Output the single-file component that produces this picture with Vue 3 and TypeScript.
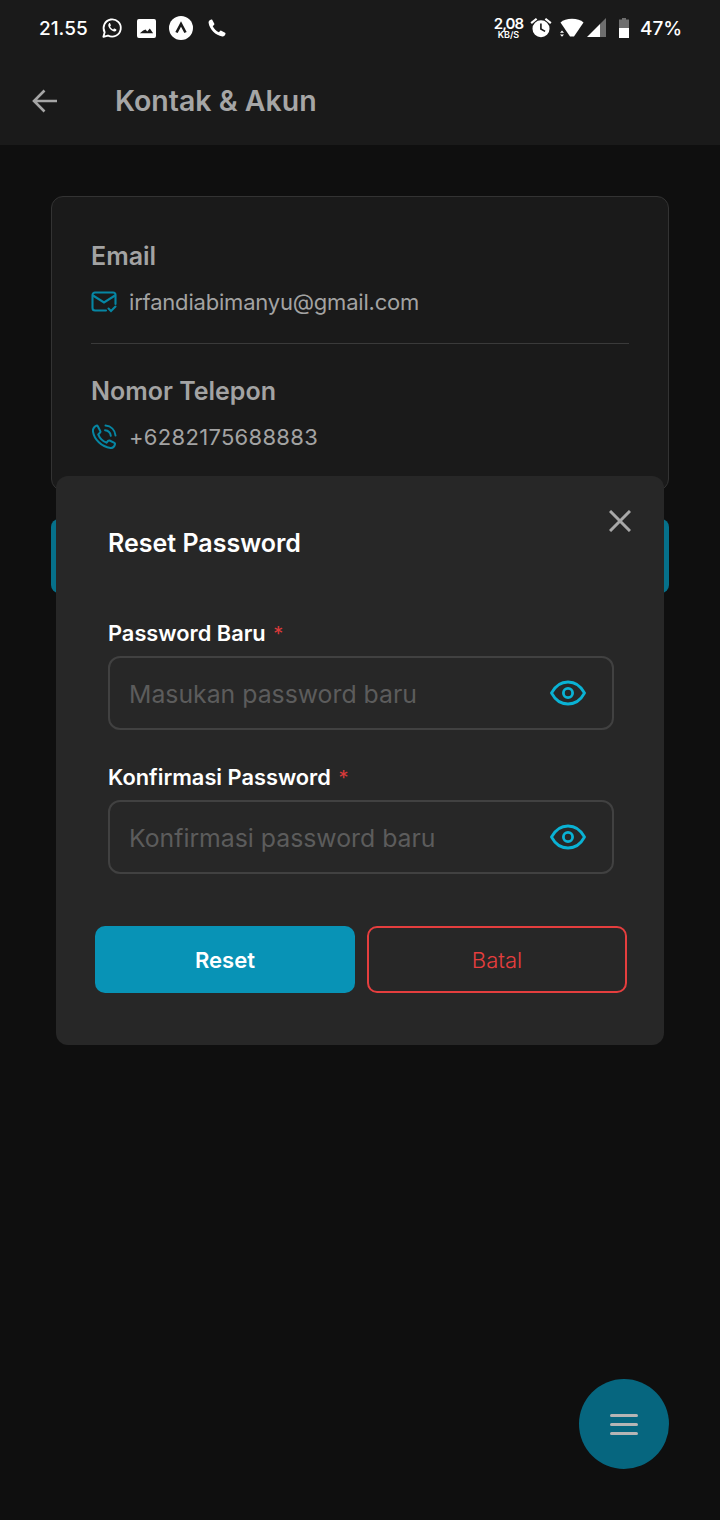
<script setup lang="ts">
import { ref } from 'vue'

const newPassword = ref('')
const confirmPassword = ref('')
</script>

<template>
  <div class="screen">
    <header class="header">
      <div class="status-bar">
        <div class="status-left">
          <span class="clock">21.55</span>
          <svg class="s-wa" viewBox="0 0 24 24" width="22" height="22" fill="none">
            <path d="M2.6 21.6l1.4-5A9.4 9.4 0 1 1 7.6 20.2z" stroke="#fff" stroke-width="2" stroke-linejoin="round" />
            <path d="M8.8 7.2c-.9.8-1.1 2-.5 3.4 1 2.3 2.900 4.100 5.300 5 1.300.5 2.500.1 3.100-.9.300-.5.200-1-.3-1.300l-1.500-.8c-.4-.2-.7-.1-1 .2l-.6.7c-1.500-.6-2.700-1.700-3.400-3.200l.6-.6c.3-.3.300-.6.200-1l-.7-1.500c-.2-.5-.4-.6-.7-.6h-.5z" fill="#fff" />
          </svg>
          <svg class="s-img" viewBox="0 0 20 20" width="19" height="19">
            <path fill="#fff" fill-rule="evenodd" d="M2 0h16a2 2 0 0 1 2 2v16a2 2 0 0 1-2 2H2a2 2 0 0 1-2-2V2a2 2 0 0 1 2-2zm1 15h14l-3.500-5-2.700 3.200L9 11l-2.500 1.200z" />
          </svg>
          <svg class="s-app" viewBox="0 0 24 24" width="24" height="24">
            <circle cx="12" cy="12" r="12" fill="#fff" />
            <path d="M7.500 16.500L12 8l4.500 8.500" fill="none" stroke="#1a1a1a" stroke-width="2.600" />
          </svg>
          <svg class="s-call" viewBox="0 0 24 24" width="20" height="20">
            <path fill="#fff" d="M6.400 2.300l2.400 4.600c.2.400.1.800-.2 1.100L6.900 9.800c1.400 3 4.300 5.900 7.300 7.300l1.800-1.700c.3-.3.700-.4 1.100-.2l4.600 2.400c.5.200.7.700.5 1.200-.6 2.200-2 3.600-3.900 3.300C10.400 21 3 13.600 1.900 5.700 1.600 3.800 3 2.400 5.200 1.800c.5-.2 1 0 1.200.5z" />
          </svg>
        </div>
        <div class="status-right">
          <div class="speed"><span class="speed-num">2,08</span><span class="speed-unit">KB/S</span></div>
          <svg class="s-alarm" viewBox="0 0 24 24" width="22" height="22">
            <path fill="#fff" fill-rule="evenodd" d="M12 3.500a9.300 9.300 0 1 1 0 18.600 9.300 9.300 0 0 1 0-18.600zM11 7v6.500l5 2.900.9-1.400-4.100-2.400V7z" />
            <path fill="#fff" d="M6.500 1L.5 5.800 2 7.600l6-4.800zM17.500 1l6 4.800-1.500 1.800-6-4.800z" />
          </svg>
          <svg class="s-wifi" viewBox="0 0 26 20" width="26" height="20">
            <path fill="#fff" d="M1.500 4.500C4.200 2 8 .8 13 .8s8.800 1.200 11.500 3.700L15 18.500h-4z" />
            <path fill="#fff" d="M3 12.500l2 2.300H1zM1 16.500h4l-2 2.300z" />
          </svg>
          <svg class="s-signal" viewBox="0 0 20 20" width="20" height="20">
            <path fill="#fff" d="M0 19L13 6v13z" />
            <path fill="#6e6e6e" d="M13 6l6-6v19h-6z" />
          </svg>
          <svg class="s-battery" viewBox="0 0 10 20" width="10" height="20">
            <path fill="#6e6e6e" d="M3 0h4v1.500h3V10H0V1.500h3z" />
            <path fill="#fff" d="M0 10h10v10H0z" />
          </svg>
          <span class="pct">47%</span>
        </div>
      </div>
      <div class="toolbar">
        <svg class="back" viewBox="0 0 26 26" width="26" height="26" fill="none">
          <path d="M25 13H2M12.500 2.500L2 13l10.500 10.500" stroke="#a6a6a6" stroke-width="2.600" />
        </svg>
        <h1 class="title">Kontak &amp; Akun</h1>
      </div>
    </header>

    <main class="content">
      <section class="card">
        <div class="info-row with-line">
          <div class="info-label">Email</div>
          <div class="info-value email">
            <svg viewBox="0 0 26 22" width="26" height="22" fill="none">
              <path d="M15 19.500H4a2.500 2.500 0 0 1-2.500-2.500V4A2.500 2.500 0 0 1 4 1.500h18A2.500 2.500 0 0 1 24.500 4v9" stroke="#0686a3" stroke-width="2.100" stroke-linecap="round" />
              <path d="M2 4.500l11 7 11-7" stroke="#0686a3" stroke-width="2.100" />
              <path d="M17.500 17.500l2.500 2.500 4.500-4.500" stroke="#0686a3" stroke-width="2.100" stroke-linecap="round" />
            </svg>
            <span>irfandiabimanyu@gmail.com</span>
          </div>
        </div>
        <div class="info-row phone">
          <div class="info-label">Nomor Telepon</div>
          <div class="info-value">
            <svg viewBox="0 0 26 26" width="26" height="26" fill="none">
              <path d="M6.800 2.200l2.600 5c.3.500.1 1-.3 1.400L7.200 10.400c1.400 3.500 4.600 6.800 8.200 8.300l1.800-1.900c.4-.4.900-.5 1.400-.3l4.800 2.400c.6.300.8.800.6 1.400-.6 2.400-2.200 4-4.600 3.600C10.500 22.800 3.200 15.500 2 7.600 1.600 5 3 3 5.400 1.700c.6-.2 1.100 0 1.400.5z" stroke="#0686a3" stroke-width="2" stroke-linejoin="round" />
              <path d="M14 6.200c3.200.3 5.400 2.500 5.800 5.600M14.500 1.500c5.500.5 9.500 4.400 10 10" stroke="#0686a3" stroke-width="2" stroke-linecap="round" />
            </svg>
            <span>+6282175688883</span>
          </div>
        </div>
      </section>
      <div class="behind-btn"></div>
    </main>

    <div class="modal">
      <div class="modal-head">
        <h2 class="modal-title">Reset Password</h2>
        <svg class="close" viewBox="0 0 22 22" width="22" height="22" fill="none">
          <path d="M1 1l20 20M21 1L1 21" stroke="#a8a8a8" stroke-width="3" />
        </svg>
      </div>
      <div class="modal-body">
        <label class="field">
          <span class="field-label">Password Baru <em>*</em></span>
          <span class="input-box">
            <input v-model="newPassword" type="password" placeholder="Masukan password baru" />
            <svg viewBox="0 0 36 26" width="36" height="26" fill="none">
              <path d="M1.500 13C5.500 5.500 11 2 18 2s12.500 3.500 16.500 11C30.500 20.500 25 24 18 24S5.500 20.500 1.500 13z" stroke="#0ab2d4" stroke-width="2.800" stroke-linejoin="round" />
              <circle cx="18" cy="13" r="4.600" stroke="#0ab2d4" stroke-width="2.800" />
            </svg>
          </span>
        </label>
        <label class="field">
          <span class="field-label">Konfirmasi Password <em>*</em></span>
          <span class="input-box">
            <input v-model="confirmPassword" type="password" placeholder="Konfirmasi password baru" />
            <svg viewBox="0 0 36 26" width="36" height="26" fill="none">
              <path d="M1.500 13C5.500 5.500 11 2 18 2s12.500 3.500 16.500 11C30.500 20.500 25 24 18 24S5.500 20.500 1.500 13z" stroke="#0ab2d4" stroke-width="2.800" stroke-linejoin="round" />
              <circle cx="18" cy="13" r="4.600" stroke="#0ab2d4" stroke-width="2.800" />
            </svg>
          </span>
        </label>
      </div>
      <div class="modal-actions">
        <button class="btn btn-reset" type="button">Reset</button>
        <button class="btn btn-cancel" type="button">Batal</button>
      </div>
    </div>

    <button class="fab" type="button" aria-label="Menu">
      <span></span><span></span><span></span>
    </button>
  </div>
</template>

<style scoped>
.screen {
  position: relative;
  width: 720px;
  height: 1520px;
  overflow: hidden;
  background: #0f0f0f;
  font-family: Inter, "Noto Sans", sans-serif;
  display: flex;
  flex-direction: column;
}

.header {
  height: 145px;
  background: #1a1a1a;
  flex-shrink: 0;
}

.status-bar {
  height: 56px;
  padding: 0 40px 0 39px;
  display: flex;
  align-items: center;
  justify-content: space-between;
  color: #fff;
}

.status-left,
.status-right {
  display: flex;
  align-items: center;
}

.clock {
  font-size: 19px;
  font-weight: 500;
  margin-right: 13px;
}

.s-img {
  margin-left: 14px;
}

.s-app {
  margin-left: 13px;
}

.s-call {
  margin-left: 14px;
}

.speed {
  display: flex;
  flex-direction: column;
  align-items: center;
  margin-right: 7px;
}

.speed-num {
  font-size: 15px;
  font-weight: 600;
  line-height: 13px;
  letter-spacing: -1px;
}

.speed-unit {
  font-size: 9px;
  font-weight: 600;
  line-height: 9px;
}

.s-wifi {
  margin-left: 7px;
}

.s-signal {
  margin-left: 2px;
}

.s-battery {
  margin-left: 12px;
}

.pct {
  font-size: 19px;
  font-weight: 500;
  margin-left: 11px;
  width: 40px;
}

.toolbar {
  height: 89px;
  padding: 0 0 0 32px;
  display: flex;
  align-items: center;
}

.title {
  margin: 0 0 0 57px;
  font-size: 28.5px;
  font-weight: 600;
  color: #a6a6a6;
}

.content {
  padding: 51px 51px 0;
  display: flex;
  flex-direction: column;
  gap: 28px;
}

.card {
  height: 295px;
  box-sizing: border-box;
  background: #1a1a1a;
  border: 1px solid #333;
  border-radius: 12px;
  padding: 41px 39px 0;
}

.with-line {
  height: 105px;
  border-bottom: 1px solid #3a3a3a;
}

.phone {
  padding-top: 29px;
}

.info-label {
  font-size: 25px;
  font-weight: 600;
  line-height: 36px;
  color: #a3a3a3;
}

.info-value {
  display: flex;
  align-items: center;
  gap: 12px;
  margin-top: 13px;
  height: 30px;
  font-size: 22px;
  letter-spacing: 0.3px;
  color: #a3a3a3;
}

.info-value.email {
  letter-spacing: -0.2px;
}

.behind-btn {
  height: 74px;
  border-radius: 8px;
  background: #06708a;
}

.modal {
  position: absolute;
  left: 56px;
  top: 476px;
  width: 608px;
  height: 569px;
  background: #272727;
  border-radius: 12px;
  display: flex;
  flex-direction: column;
}

.modal-head {
  height: 136px;
  padding: 0 33px 0 52px;
  display: flex;
  justify-content: space-between;
  align-items: flex-start;
}

.modal-title {
  margin: 52px 0 0;
  font-size: 25px;
  line-height: 30px;
  font-weight: 600;
  color: #fff;
}

.close {
  margin-top: 34px;
}

.modal-body {
  padding: 0 50px 0 52px;
  display: flex;
  flex-direction: column;
  gap: 26px;
}

.field {
  display: flex;
  flex-direction: column;
  gap: 8px;
}

.field-label {
  font-size: 21.8px;
  line-height: 30px;
  font-weight: 600;
  color: #fff;
  height: 30px;
  margin-top: 6px;
}

.field-label em {
  font-style: normal;
  font-size: 20px;
  font-weight: 400;
  color: #d93a3a;
  margin-left: 2px;
}

.input-box {
  height: 74px;
  box-sizing: border-box;
  border: 2px solid #414141;
  border-radius: 12px;
  display: flex;
  align-items: center;
  padding: 0 26px 0 19px;
}

.input-box input {
  flex: 1;
  min-width: 0;
  padding: 1px 0 0;
  background: none;
  border: none;
  outline: none;
  font-family: inherit;
  font-size: 24.8px;
  color: #fff;
}

.input-box input::placeholder {
  color: #5c5c5c;
  opacity: 1;
}

.modal-actions {
  margin-top: 52px;
  padding: 0 37px 0 39px;
  display: flex;
  gap: 12px;
}

.btn {
  flex: none;
  width: 260px;
  height: 67px;
  border-radius: 10px;
  font-family: inherit;
  font-size: 22px;
}

.btn-reset {
  border: none;
  background: #0893b6;
  color: #fff;
  font-weight: 600;
}

.btn-cancel {
  background: none;
  border: 2px solid #e53e3e;
  color: #e53e3e;
  font-weight: 300;
}

.fab {
  position: absolute;
  left: 579px;
  top: 1379px;
  width: 90px;
  height: 90px;
  padding: 0;
  border: none;
  border-radius: 50%;
  background: #06667f;
  display: flex;
  flex-direction: column;
  align-items: center;
  justify-content: center;
  gap: 6px;
}

.fab span {
  width: 28px;
  height: 3px;
  border-radius: 2px;
  background: #b5b5b5;
}
</style>
